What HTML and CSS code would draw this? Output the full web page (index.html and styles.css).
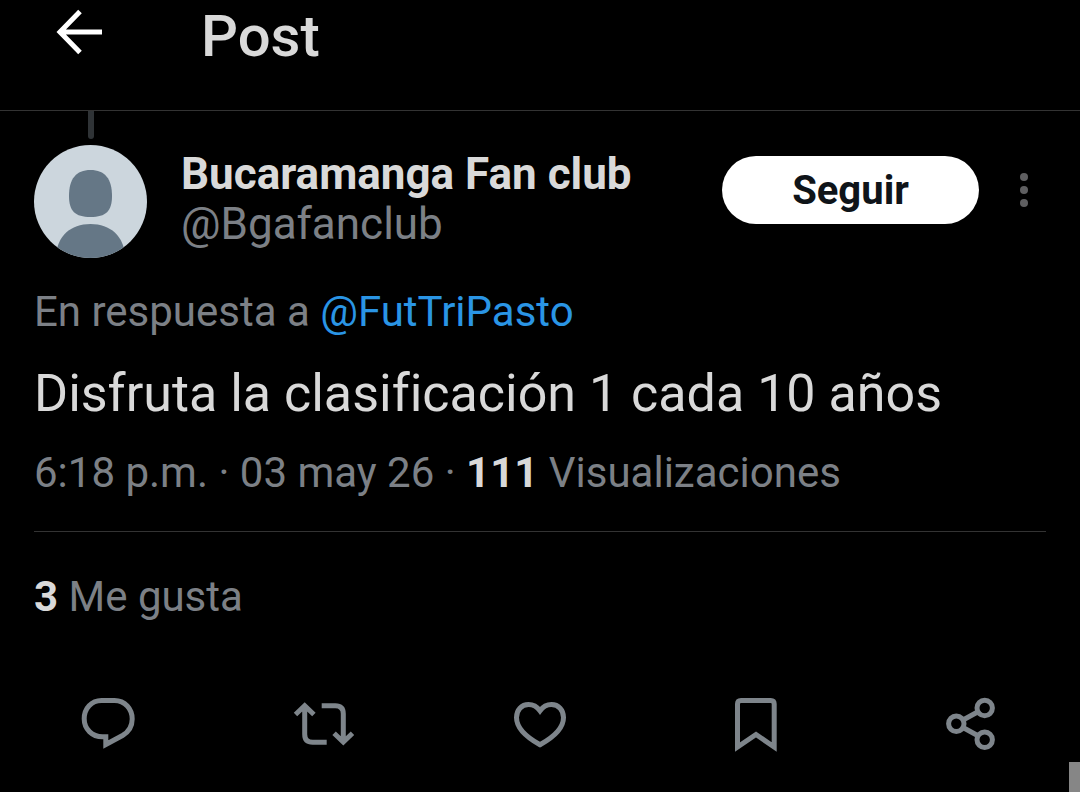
FILE: index.html
```html
<!DOCTYPE html>
<html lang="es">

<head>
    <meta charset="UTF-8">
    <meta name="viewport" content="width=device-width, initial-scale=1.0">
    <title>Post</title>
    <link rel="stylesheet" href="styles.css">
</head>

<body>
    <header class="topbar">
        <button class="back" type="button" aria-label="Atrás">
            <svg width="48" height="48" viewBox="0 0 48 48">
                <path d="M25 3.500 5 24l20 20.500M5 24h42" />
            </svg>
        </button>
        <h1>Post</h1>
    </header>

    <main class="post">
        <div class="thread-line"></div>

        <div class="author">
            <svg class="avatar" viewBox="0 0 113 113">
                <clipPath id="round">
                    <circle cx="56.500" cy="56.500" r="56.500" />
                </clipPath>
                <g clip-path="url(#round)">
                    <rect width="113" height="113" fill="#ccd6dd" />
                    <path d="M56.500 25C71 25 78 34 78 51c0 15-6 21-21.500 21S35 66 35 51c0-17 7-26 21.500-26z" fill="#657786" />
                    <path d="M22 113c0-21 14-34 34.500-34S91 92 91 113z" fill="#657786" />
                </g>
            </svg>
            <div class="names">
                <a class="name" href="#">Bucaramanga Fan club</a>
                <a class="handle" href="#">@Bgafanclub</a>
            </div>
            <button class="follow" type="button">Seguir</button>
            <button class="more" type="button" aria-label="Más opciones">
                <svg width="10" height="36" viewBox="0 0 10 36">
                    <circle cx="5" cy="5" r="4" />
                    <circle cx="5" cy="18" r="4" />
                    <circle cx="5" cy="31" r="4" />
                </svg>
            </button>
        </div>

        <p class="reply">En respuesta a <a href="#">@FutTriPasto</a></p>
        <p class="text">Disfruta la clasificación 1 cada 10 años</p>
        <p class="meta">6:18 p.m. · 03 may 26 · <strong>111</strong> Visualizaciones</p>
        <p class="likes"><strong>3</strong> Me gusta</p>
    </main>

    <div class="actions">
        <button type="button" aria-label="Responder">
            <svg viewBox="0 0 64 64">
                <path d="M25.500 8.500h13C49 8.500 56.200 17 56.200 27c0 7-3.700 13-9.700 16.500L29.800 52.500V44.800H26.500C16 44.800 8.200 37 8.200 26.800 8.200 16.500 15.500 8.500 25.500 8.500z" />
            </svg>
        </button>
        <button type="button" aria-label="Repostear">
            <svg viewBox="0 0 64 64">
                <path d="M3.500 22.500l9.200-8.700 9.200 8.700M12.700 14v28.300q0 8 8 8h14M29.700 13.700h13.600q8 0 8 8V50M42.100 41.300l9.200 8.700 9.200-8.700" />
            </svg>
        </button>
        <button type="button" aria-label="Me gusta">
            <svg viewBox="0 0 64 64">
                <path d="M32 18.800C29 14.600 25 12.500 20.500 12.500 13.500 12.500 8.500 18 8.500 25.500c0 10 9.500 19.500 23.500 27.200C46 45 55.500 35.500 55.500 25.500c0-7.500-5-13-12-13C39 12.500 35 14.600 32 18.800z" />
            </svg>
        </button>
        <button type="button" aria-label="Guardar">
            <svg viewBox="0 0 64 64">
                <path d="M13.500 55V12q0-3.500 3.500-3.500h29.700q3.500 0 3.500 3.500v43L32 42.500z" />
            </svg>
        </button>
        <button type="button" aria-label="Compartir">
            <svg viewBox="0 0 64 64">
                <circle cx="16.300" cy="31.700" r="7.700" />
                <circle cx="44.700" cy="16" r="7.700" />
                <circle cx="44.700" cy="47.700" r="7.700" />
                <path d="M23 28l15-8.300M23 35.500l15 8.300" />
            </svg>
        </button>
    </div>

    <div class="corner"></div>
</body>

</html>
```

FILE: styles.css
```css
body {
    background-color: #000;
    color: #d9d9d9;
    margin: 0;
    font-family: Roboto, 'Liberation Sans', sans-serif;
    font-size: 42px;
    line-height: 50px;
    font-variant-ligatures: none;
}

button {
    background: none;
    border: none;
    padding: 0;
    font-family: inherit;
    cursor: pointer;
}

svg {
    display: block;
}

a {
    text-decoration: none;
}

p {
    margin: 0;
}

.topbar {
    display: flex;
    align-items: flex-start;
    gap: 98px;
    height: 102px;
    padding: 8px 34px 0 55px;
    border-bottom: 1px solid #333;
}

.back svg {
    fill: none;
    stroke: #fff;
    stroke-width: 5;
}

.topbar h1 {
    margin: 0;
    font-size: 58px;
    font-weight: 500;
    line-height: 56px;
}

.post {
    padding: 0 34px;
}

.thread-line {
    width: 6px;
    height: 28px;
    margin-left: 54px;
    border-radius: 0 0 3px 3px;
    background-color: #2f3336;
}

.author {
    display: flex;
    align-items: flex-start;
    margin-top: 6px;
}

.avatar {
    width: 113px;
    height: 113px;
    margin-right: 34px;
}

.names {
    display: flex;
    flex: 1;
    flex-direction: column;
    padding-top: 4px;
    font-size: 44px;
}

.name {
    color: #d9d9d9;
    font-weight: 700;
}

.handle {
    color: #7c8086;
}

.follow {
    min-width: 257px;
    height: 68px;
    margin-top: 11px;
    border-radius: 34px;
    background-color: #fff;
    color: #0f1419;
    font-size: 40px;
    font-weight: 700;
}

.more {
    margin: 27px 17px 0 40px;
}

.more svg {
    fill: #5f5f61;
}

.reply {
    margin-top: 29px;
    color: #7c8086;
}

.reply a {
    color: #2a95e5;
}

.text {
    margin-top: 27px;
    font-size: 52px;
    line-height: 60px;
}

.meta {
    padding-bottom: 33px;
    margin-top: 24px;
    border-bottom: 1px solid #333;
    color: #7c8086;
}

.likes {
    margin-top: 40px;
    color: #7c8086;
}

.meta strong,
.likes strong {
    color: #d9d9d9;
}

.actions {
    display: grid;
    grid-template-columns: repeat(5, 1fr);
    justify-items: center;
    margin-top: 70px;
}

.actions svg {
    width: 64px;
    height: 64px;
    fill: none;
    stroke: #7e858b;
    stroke-width: 5;
}

.corner {
    position: absolute;
    right: 0;
    bottom: 0;
    width: 11px;
    height: 30px;
    background-color: #868686;
}
```
